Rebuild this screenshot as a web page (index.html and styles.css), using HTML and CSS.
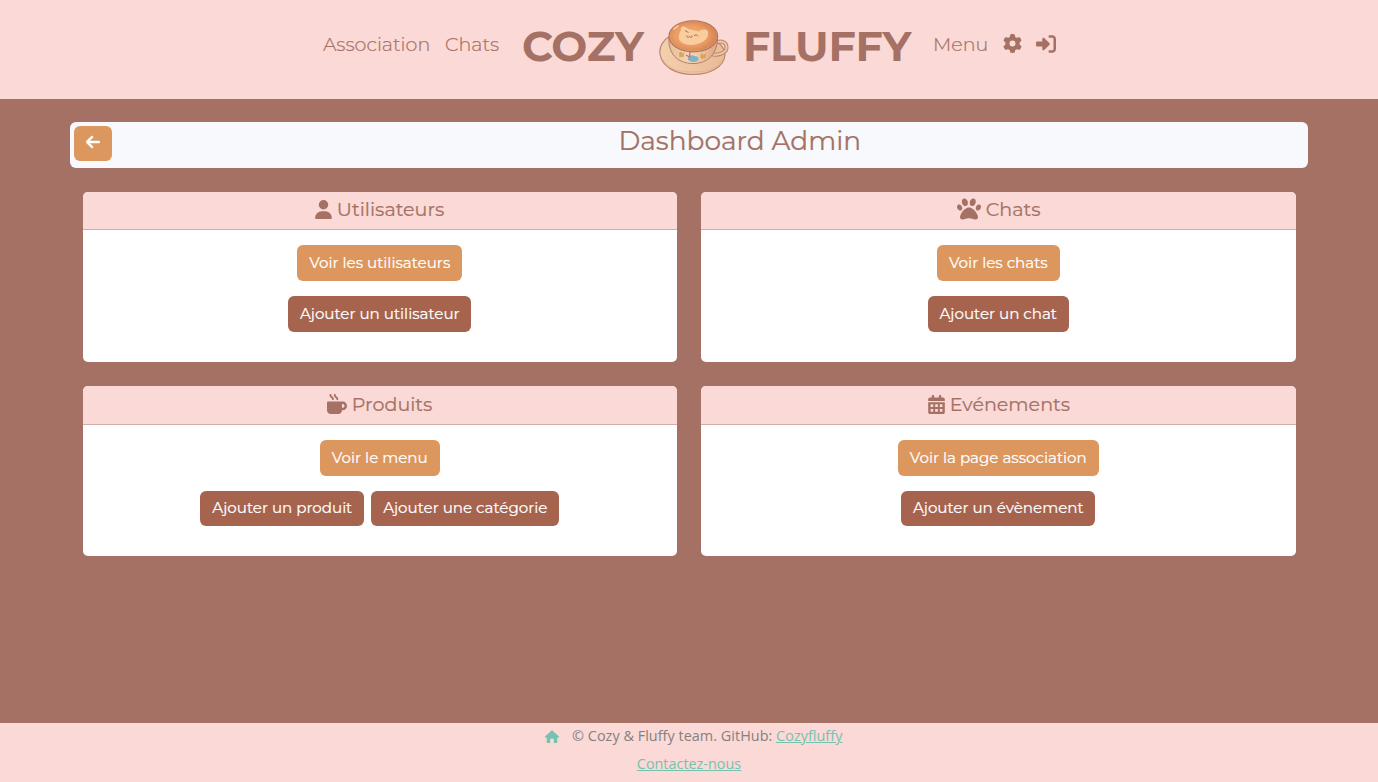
FILE: index.html
```html
<!DOCTYPE html>
<html lang="fr">
<head>
<meta charset="utf-8">
<title>Cozy Fluffy - Dashboard Admin</title>
<link rel="stylesheet" href="styles.css">
</head>
<body>
<header class="site-header">
  <nav class="nav">
    <a class="link w-assoc">Association</a>
    <a class="link w-chats">Chats</a>
    <a class="brand">
      <span class="word w-cozy">COZY</span>
      <svg class="cup" viewBox="0 0 70 58">
        <defs>
          <radialGradient id="coffee" cx=".45" cy=".5" r=".6"><stop offset="0" stop-color="#f5b581"/><stop offset=".6" stop-color="#e99b64"/><stop offset="1" stop-color="#d07c4c"/></radialGradient>
          <linearGradient id="bowl"><stop offset="0" stop-color="#e8bd98"/><stop offset=".45" stop-color="#f3d9b8"/><stop offset="1" stop-color="#dda583"/></linearGradient>
          <linearGradient id="plate"><stop offset="0" stop-color="#f3d0ad"/><stop offset="1" stop-color="#ebba98"/></linearGradient>
        </defs>
        <path d="M11 16C4 20 0 27 1 34C3 47 17 54.500 34 54.500S65 47 66 35C66 27 59 20 47 18Z" fill="url(#plate)" stroke="#b98770" stroke-width="1.200"/>
        <path d="M4 40C10 49 20 52 35 52S58 48 63 40" fill="none" stroke="#e4b193" stroke-width=".8"/>
        <path d="M56 23C62 20 68 22 67.500 28C67 33 59 36 52 34" fill="none" stroke="#b98770" stroke-width="4"/>
        <path d="M56 23C62 20 68 22 67.500 28C67 33 59 36 52 34" fill="none" stroke="#f0c8a6" stroke-width="2"/>
        <path d="M10 18C9 33 18 43.500 34 43.500S58 33 58.500 19Z" fill="url(#bowl)" stroke="#b57d63"/>
        <ellipse cx="34.300" cy="16.300" rx="24.300" ry="15.500" fill="#e5ac80" stroke="#b07158" stroke-width="1.200"/>
        <ellipse cx="34.300" cy="16" rx="23.600" ry="14.800" fill="url(#coffee)"/>
        <path d="M22 8.500C22 5.500 27 6 29 9L40 11.500C44 8 50 9.500 49 13C50 18 45 22 38 24C28 27 18 22 20 16C20 13 22 11 22 8.500Z" fill="#f9cd9d"/>
        <path d="M26 10.500l3.500 2M28 15.500c-.5 2.500 2 2.500 2.600.6c.4 2 3 1.800 2.600-.6M35 15.500q3-2 4 1" fill="none" stroke="#b66f4e"/>
        <path d="M15 9l4-3" stroke="#f9c797" stroke-width="1.800" stroke-linecap="round"/>
        <path d="M20 33l2-1.500l1.500 2l2-1.500l-1 5l-4 0z" fill="#dba45c"/>
        <path d="M41 36l2-3l1.500 2l3-2l-1 5l-4 1z" fill="#dba45c"/>
        <path d="M28.500 39c2-5 6-4 7-3c4 0 5 3 3 5c-4 1.500-8 1.500-10-2z" fill="#82b2c5"/>
        <path d="M27 35l3.500 2l.5-5" fill="none" stroke="#cc6b69" stroke-width="1.300"/>
      </svg>
      <span class="word w-fluffy">FLUFFY</span>
    </a>
    <a class="link w-menu">Menu</a>
    <svg class="nav-icon gear" viewBox="0 0 512 512"><path d="M495.900 166.600c3.200 8.700 .5 18.400-6.400 24.600l-43.300 39.400c1.100 8.300 1.700 16.800 1.700 25.400s-.6 17.100-1.700 25.400l43.300 39.400c6.900 6.200 9.600 15.900 6.400 24.600c-4.400 11.900-9.700 23.300-15.800 34.300l-4.700 8.100c-6.600 11-14 21.400-22.100 31.200c-5.900 7.200-15.700 9.600-24.500 6.800l-55.700-17.700c-13.400 10.300-28.200 18.900-44 25.400l-12.500 57.100c-2 9.100-9 16.300-18.200 17.800c-13.800 2.300-28 3.500-42.500 3.500s-28.700-1.200-42.500-3.500c-9.200-1.500-16.200-8.700-18.200-17.800l-12.500-57.100c-15.800-6.500-30.600-15.100-44-25.400L83.100 425.900c-8.800 2.800-18.600 .3-24.500-6.800c-8.100-9.800-15.500-20.200-22.100-31.200l-4.700-8.100c-6.100-11-11.400-22.400-15.800-34.300c-3.200-8.700-.5-18.400 6.400-24.600l43.300-39.400C64.600 273.100 64 264.600 64 256s.6-17.100 1.700-25.400L22.400 191.200c-6.900-6.200-9.600-15.900-6.400-24.600c4.400-11.900 9.700-23.300 15.800-34.300l4.700-8.100c6.600-11 14-21.400 22.100-31.200c5.900-7.200 15.700-9.600 24.500-6.800l55.700 17.700c13.400-10.300 28.200-18.900 44-25.400l12.500-57.100c2-9.100 9-16.300 18.200-17.800C227.300 1.200 241.500 0 256 0s28.700 1.200 42.500 3.500c9.200 1.500 16.200 8.700 18.200 17.800l12.500 57.100c15.800 6.500 30.600 15.100 44 25.400l55.700-17.700c8.800-2.800 18.600-.3 24.500 6.800c8.100 9.800 15.500 20.200 22.100 31.200l4.700 8.100c6.100 11 11.400 22.400 15.800 34.300zM256 336a80 80 0 1 0 0-160 80 80 0 1 0 0 160z"/></svg>
    <svg class="nav-icon login" viewBox="0 0 512 512"><path d="M217.900 105.900L340.700 228.700c7.200 7.200 11.300 17.100 11.300 27.300s-4.100 20.100-11.300 27.300L217.900 406.100c-6.400 6.400-15 9.900-24 9.900c-18.700 0-33.900-15.200-33.900-33.900l0-62.100L32 320c-17.700 0-32-14.300-32-32l0-64c0-17.700 14.300-32 32-32l128 0 0-62.100c0-18.700 15.200-33.900 33.900-33.900c9 0 17.600 3.600 24 9.900zM352 416l64 0c17.700 0 32-14.300 32-32l0-256c0-17.700-14.300-32-32-32l-64 0c-17.700 0-32-14.300-32-32s14.300-32 32-32l64 0c53 0 96 43 96 96l0 256c0 53-43 96-96 96l-64 0c-17.700 0-32-14.300-32-32s14.300-32 32-32z"/></svg>
  </nav>
</header>

<main class="main">
  <div class="titlebar">
    <a class="back"><svg viewBox="0 0 448 512"><path d="M9.400 233.400c-12.500 12.500-12.500 32.800 0 45.300l160 160c12.500 12.500 32.800 12.500 45.300 0s12.500-32.800 0-45.300L109.200 288 416 288c17.700 0 32-14.300 32-32s-14.300-32-32-32l-306.700 0L214.600 118.600c12.500-12.500 12.500-32.800 0-45.300s-32.800-12.500-45.300 0l-160 160z"/></svg></a>
    <h1 class="title">Dashboard Admin</h1>
  </div>

  <div class="cards">
    <section class="card">
      <h2 class="card-head upper"><svg class="i-user" viewBox="0 0 448 512"><path d="M224 256A128 128 0 1 0 224 0a128 128 0 1 0 0 256zm-45.700 48C79.800 304 0 383.800 0 482.300C0 498.700 13.300 512 29.700 512H418.300c16.400 0 29.700-13.300 29.700-29.700C448 383.800 368.200 304 269.700 304H178.300z"/></svg><span class="w-h1">Utilisateurs</span></h2>
      <div class="card-body">
        <a class="btn view b165">Voir les utilisateurs</a>
        <div class="row"><a class="btn add b183">Ajouter un utilisateur</a></div>
      </div>
    </section>
    <section class="card">
      <h2 class="card-head upper"><svg class="i-paw" viewBox="0 0 512 512"><path d="M226.500 92.900c14.300 42.900-.3 86.200-32.600 96.800s-70.100-15.600-84.400-58.500s.3-86.200 32.600-96.800s70.100 15.600 84.400 58.500zM100.400 198.600c18.900 32.400 14.300 70.100-10.200 84.100s-59.700-.9-78.500-33.300S-2.700 179.300 21.800 165.300s59.700 .9 78.500 33.300zM69.200 401.200C121.600 259.900 214.700 224 256 224s134.400 35.900 186.800 177.200c3.600 9.700 5.200 20.100 5.200 30.500v1.600c0 25.800-20.900 46.700-46.700 46.700c-11.500 0-22.900-1.400-34-4.200l-88-22c-15.300-3.800-31.300-3.800-46.600 0l-88 22c-11.100 2.800-22.500 4.200-34 4.200C84.900 480 64 459.100 64 433.300v-1.600c0-10.400 1.600-20.800 5.200-30.500zM421.800 282.700c-24.500-14-29.100-51.700-10.200-84.100s54-47.300 78.500-33.300s29.100 51.700 10.200 84.100s-54 47.300-78.500 33.300zM310.100 189.700c-32.300-10.600-46.900-53.900-32.600-96.800s52.100-69.100 84.400-58.500s46.900 53.900 32.600 96.800s-52.100 69.100-84.400 58.500z"/></svg><span class="w-h2">Chats</span></h2>
      <div class="card-body">
        <a class="btn view b123">Voir les chats</a>
        <div class="row"><a class="btn add b141">Ajouter un chat</a></div>
      </div>
    </section>
    <section class="card">
      <h2 class="card-head"><svg class="i-mug" viewBox="0 0 512 512"><path d="M88 0C74.700 0 64 10.700 64 24c0 38.900 23.400 59.400 39.100 73.100l1.100 1C120.500 112.300 128 119.900 128 136c0 13.300 10.700 24 24 24s24-10.700 24-24c0-38.900-23.400-59.400-39.100-73.100l-1.100-1C119.500 47.700 112 40.100 112 24c0-13.300-10.700-24-24-24zM32 192c-17.700 0-32 14.300-32 32V416c0 53 43 96 96 96H288c53 0 96-43 96-96h16c61.900 0 112-50.100 112-112s-50.100-112-112-112H352 32zm352 64h16c26.500 0 48 21.500 48 48s-21.500 48-48 48H384V256zM224 24c0-13.300-10.700-24-24-24s-24 10.700-24 24c0 38.900 23.400 59.400 39.100 73.100l1.100 1C232.500 112.300 240 119.900 240 136c0 13.300 10.700 24 24 24s24-10.700 24-24c0-38.900-23.400-59.400-39.100-73.100l-1.100-1C231.500 47.700 224 40.100 224 24z"/></svg><span class="w-h3">Produits</span></h2>
      <div class="card-body">
        <a class="btn view b120">Voir le menu</a>
        <div class="row"><a class="btn add b164 low">Ajouter un produit</a><a class="btn add b188 low">Ajouter une catégorie</a></div>
      </div>
    </section>
    <section class="card">
      <h2 class="card-head"><svg class="i-cal" viewBox="0 0 448 512"><path fill-rule="evenodd" d="M128 0c17.700 0 32 14.300 32 32V64H288V32c0-17.700 14.300-32 32-32s32 14.300 32 32V64h48c26.500 0 48 21.500 48 48v48H0V112C0 85.500 21.500 64 48 64H96V32c0-17.700 14.300-32 32-32zM0 192H448V464c0 26.500-21.500 48-48 48H48c-26.500 0-48-21.500-48-48zM64 248v72h72v-72zm124 0v72h72v-72zm124 0v72h72v-72zM64 376v72h72v-72zm124 0v72h72v-72zm124 0v72h72v-72z"/></svg><span class="w-h4">Evénements</span></h2>
      <div class="card-body">
        <a class="btn view b201">Voir la page association</a>
        <div class="row"><a class="btn add b194 low">Ajouter un évènement</a></div>
      </div>
    </section>
  </div>
</main>

<footer class="footer">
  <div class="foot-line">
    <svg class="home" viewBox="0 0 16 14"><path d="M8 0.300L15.600 7Q16 8 15 8H13.700V13Q13.700 14 12.700 14H10V9.500H6V14H3.300Q2.300 14 2.300 13V8H1Q0 8 .4 7Z"/></svg>
    <span class="copy">© Cozy &amp; Fluffy team. GitHub: <a class="foot-link">Cozyfluffy</a></span>
  </div>
  <a class="foot-link contact">Contactez-nous</a>
</footer>
</body>
</html>
```
FILE: styles.css
```css
* { box-sizing: border-box; }
body {
  margin: 0;
  height: 782px;
  display: flex;
  flex-direction: column;
  background: #a47164;
  color: #a47164;
  font-family: Montserrat, Inter, sans-serif;
  overflow: hidden;
}
svg { display: block; flex: none; fill: currentColor; }
.site-header { height: 99px; background: #fad9d6; }
.nav {
  display: flex;
  align-items: center;
  height: 88px;
  padding-left: 323px;
}
.link { font-size: 19.100px; font-weight: 300; white-space: nowrap; -webkit-text-stroke: .2px #a47164; }
.w-assoc { width: 122px; }
.w-chats { width: 77px; }
.w-menu { width: 70px; margin-left: 22px; }
.brand { display: flex; align-items: center; height: 88px; }
.word { font-size: 42.700px; letter-spacing: -.3px; font-weight: 700; white-space: nowrap; padding-top: 3px; }
.w-cozy { width: 137px; }
.w-fluffy { width: 168px; margin-left: 14px; }
.cup { width: 70px; height: 58px; margin-top: 9px; }
.gear { width: 19px; height: 19px; margin: -1px 14px 0 0; }
.login { width: 20px; height: 20px; margin-top: -1px; }

.main { flex: 1; padding: 23px 70px 0; }
.titlebar {
  display: flex;
  height: 46px;
  padding: 4px;
  background: #f8f9fc;
  border-radius: 6px;
}
.back {
  display: flex;
  align-items: center;
  justify-content: center;
  width: 38px;
  height: 35px;
  color: #fff;
  background: #dc975f;
  border-radius: 6px;
}
.back svg { width: 14px; height: 16px; margin-bottom: 3px; stroke: #fff; stroke-width: 16; }
.title {
  margin: 0 0 0 506.500px;
  font-size: 26.400px;
  line-height: 29px;
  font-weight: 400;
  white-space: nowrap;
  -webkit-text-stroke: .2px #a47164;
}
.cards {
  display: grid;
  grid-template-columns: 593.800px 594.800px;
  grid-auto-rows: 170.100px;
  gap: 24.400px 24.200px;
  padding: 23.700px 12.900px 0;
}
.card { background: #fff; border-radius: 5px; overflow: hidden; }
.card-head {
  display: flex;
  align-items: center;
  justify-content: center;
  gap: 5px;
  height: 38.600px;
  margin: 0;
  padding-bottom: 1.600px;
  background: #fad9d6;
  border-bottom: 1px solid #cfaeab;
  font-size: 19.100px;
  font-weight: 400;
  white-space: nowrap;
  -webkit-text-stroke: .2px #a47164;
}
.upper { padding-bottom: 2.600px; }
.i-user { width: 17px; height: 19px; }
.i-paw { width: 24px; height: 24px; }
.i-mug { width: 20px; height: 20px; }
.i-cal { width: 17px; height: 19px; }
.w-h1 { width: 108px; }
.w-h2 { width: 54px; }
.w-h3 { width: 81px; }
.w-h4 { width: 119px; }
.card-body { display: flex; flex-direction: column; align-items: center; gap: 15px; padding-top: 15px; }
.row { display: flex; gap: 7px; }
.btn {
  display: flex;
  align-items: center;
  justify-content: center;
  height: 36px;
  color: #fff;
  border-radius: 6px;
  font-size: 15.100px;
  font-weight: 400;
  white-space: nowrap;
  -webkit-text-stroke: .2px #fff;
}
.view { padding-bottom: .6px; background: #dc975f; }
.add { height: 35.600px; padding-bottom: .4px; background: #a6644f; }
.low { padding-bottom: 1.600px; }
.b165 { width: 165px; }
.b183 { width: 183px; }
.b123 { width: 123px; }
.b141 { width: 141px; }
.b120 { width: 120px; }
.b164 { width: 164px; }
.b188 { width: 188px; }
.b201 { width: 201px; }
.b194 { width: 194px; }

.footer {
  height: 59px;
  background: #fad9d6;
  color: #85807f;
  font: 14.400px/28px "Segoe UI", "Open Sans", sans-serif;
  text-align: center;
}
.foot-line { display: flex; align-items: center; height: 27px; padding-left: 544px; }
.home { width: 16px; height: 13px; color: #76c2af; margin: 0 12px 0 0; }
.copy { white-space: nowrap; margin-top: -2px; letter-spacing: .04px; }
.foot-link { color: #76c2af; text-decoration: underline; }
.contact { display: block; }
```
